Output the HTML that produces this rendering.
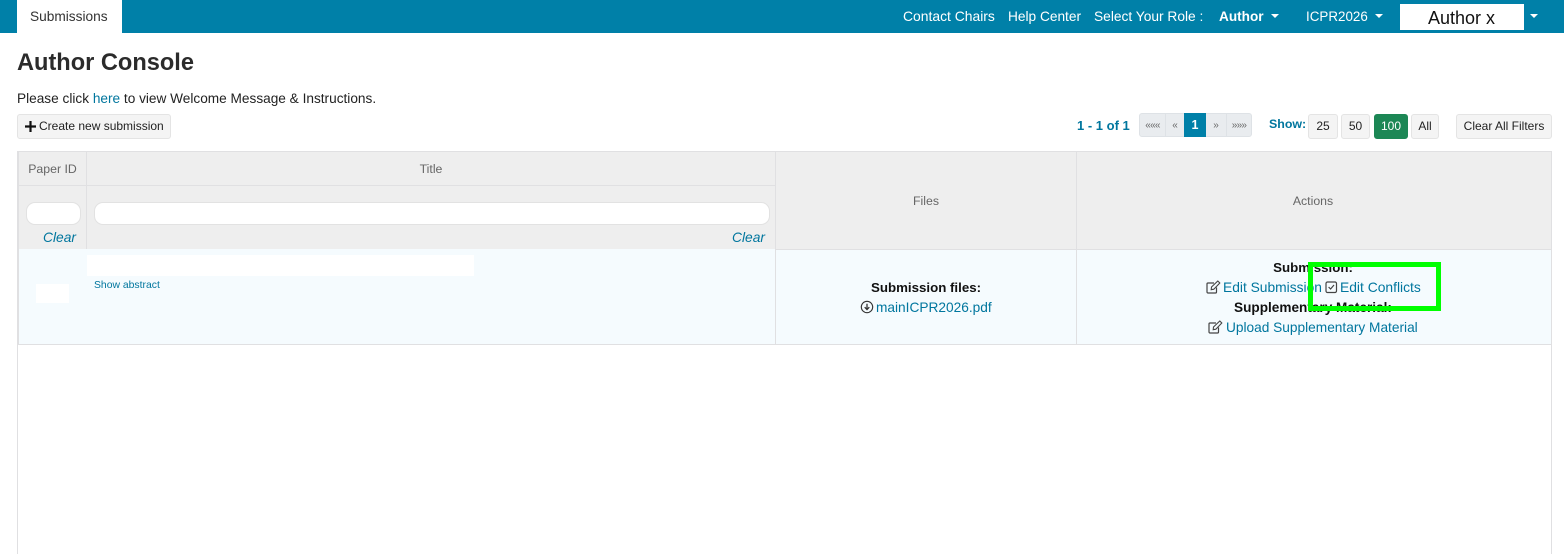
<!DOCTYPE html>
<html><head><meta charset="utf-8"><style>
html,body{margin:0;padding:0;background:#fff}
body{width:1564px;height:554px;position:relative;overflow:hidden;font-family:"Liberation Sans",sans-serif;font-size:14px;color:#333}
.a{position:absolute;white-space:nowrap}
.b{position:absolute;box-sizing:border-box}
.l{color:#00769e}
.w{color:#fff}
.c{transform:translateX(-50%)}
.caret{position:absolute;width:0;height:0;border-left:4px solid transparent;border-right:4px solid transparent;border-top:4px solid #fff}
.btn{position:absolute;box-sizing:border-box;background:#f4f4f4;border:1px solid #e4e4e4;border-radius:3px;height:25px;font-size:12px;line-height:22px;text-align:center;color:#222;white-space:nowrap}
svg{position:absolute;overflow:visible}
</style></head><body>
<div class="b" style="left:0;top:0;width:1564px;height:33px;background:#0080a8"></div>
<div class="b" style="left:17px;top:0;width:105px;height:33px;background:#fff"></div>
<div class="a" style="left:30px;top:9px;font-size:13.7px;line-height:16px;color:#333">Submissions</div>
<div class="a w" style="left:903px;top:8px;font-size:13.9px;line-height:16px">Contact Chairs</div>
<div class="a w" style="left:1008px;top:9px;font-size:13.7px;line-height:16px">Help Center</div>
<div class="a w" style="left:1094px;top:9px;font-size:13.75px;line-height:16px">Select Your Role :</div>
<div class="a w" style="left:1219px;top:9px;font-size:13.6px;line-height:16px;font-weight:bold">Author</div>
<div class="caret" style="left:1271px;top:14px"></div>
<div class="a w" style="left:1306px;top:9px;font-size:13.4px;line-height:16px">ICPR2026</div>
<div class="caret" style="left:1375px;top:14px"></div>
<div class="b" style="left:1400px;top:4px;width:124px;height:26px;background:#fff"></div>
<div class="a" style="left:1428px;top:8px;font-size:18px;line-height:20px;color:#111">Author x</div>
<div class="caret" style="left:1530px;top:14px"></div>

<div class="a" style="left:17px;top:49px;font-size:23.6px;line-height:28px;font-weight:bold;color:#2b2b2b">Author Console</div>
<div class="a" style="left:17px;top:91px;font-size:13.65px;line-height:16px;color:#222">Please click <span class="l">here</span> to view Welcome Message &amp; Instructions.</div>
<div class="btn" style="left:17px;top:114px;width:154px;text-align:left;padding-left:8px"><svg style="left:7px;top:6px" width="11" height="11" viewBox="0 0 11 11"><path d="M5.5 0v11M0 5.5h11" stroke="#111" stroke-width="2.2"/></svg><span style="margin-left:13px">Create new submission</span></div>

<div class="a l" style="left:1077px;top:118px;font-size:13px;line-height:15px;font-weight:bold">1 - 1 of 1</div>
<div class="b" style="left:1139px;top:113px;width:113px;height:24px;background:#e9ecef;border:1px solid #dee2e6;border-radius:3px"></div>
<div class="b" style="left:1165px;top:114px;width:1px;height:22px;background:#dee2e6"></div>
<div class="b" style="left:1140px;top:113px;width:25px;height:24px;font-size:10px;letter-spacing:-0.7px;line-height:26px;text-align:center;color:#666">«««</div>
<div class="b" style="left:1166px;top:113px;width:18px;height:24px;font-size:10px;line-height:26px;text-align:center;color:#666">«</div>
<div class="b" style="left:1184px;top:113px;width:22px;height:24px;background:#0080a8;color:#fff;font-size:12.5px;font-weight:bold;line-height:25px;text-align:center">1</div>
<div class="b" style="left:1206px;top:113px;width:20px;height:24px;font-size:10px;line-height:26px;text-align:center;color:#666">»</div>
<div class="b" style="left:1226px;top:114px;width:1px;height:22px;background:#dee2e6"></div>
<div class="b" style="left:1227px;top:113px;width:24px;height:24px;font-size:10px;letter-spacing:-0.7px;line-height:26px;text-align:center;color:#666">»»»</div>
<div class="a l" style="left:1269px;top:117px;font-size:12.4px;line-height:15px;font-weight:bold">Show:</div>
<div class="btn" style="left:1308px;top:114px;width:30px">25</div>
<div class="btn" style="left:1341px;top:114px;width:29px">50</div>
<div class="btn" style="left:1374px;top:114px;width:34px;background:#1c8755;border-color:#1c8755;color:#fff">100</div>
<div class="btn" style="left:1411px;top:114px;width:28px">All</div>
<div class="btn" style="left:1456px;top:114px;width:96px">Clear All Filters</div>

<!-- table -->
<div class="b" style="left:18px;top:152px;width:758px;height:98px;background:#eee"></div>
<div class="b" style="left:776px;top:152px;width:775px;height:98px;background:#eee"></div>
<div class="b" style="left:18px;top:249px;width:1533px;height:96px;background:#f5fbfe"></div>
<div class="b" style="left:18px;top:151px;width:1534px;height:1px;background:#e0e0e2"></div>
<div class="b" style="left:17px;top:151px;width:1px;height:403px;background:#e0e0e2"></div>
<div class="b" style="left:18px;top:152px;width:1px;height:193px;background:#e0e0e2"></div>
<div class="b" style="left:1551px;top:151px;width:1px;height:403px;background:#e0e0e2"></div>
<div class="b" style="left:18px;top:185px;width:758px;height:1px;background:#e0e0e2"></div>
<div class="b" style="left:86px;top:152px;width:1px;height:97px;background:#e0e0e2"></div>
<div class="b" style="left:775px;top:152px;width:1px;height:193px;background:#e0e0e2"></div>
<div class="b" style="left:1076px;top:152px;width:1px;height:193px;background:#e0e0e2"></div>
<div class="b" style="left:776px;top:249px;width:775px;height:1px;background:#e0e0e2"></div>
<div class="b" style="left:18px;top:344px;width:1533px;height:1px;background:#e0e0e2"></div>

<div class="a c" style="left:52.5px;top:162px;font-size:12.3px;line-height:15px;color:#666">Paper ID</div>
<div class="a c" style="left:431px;top:162px;font-size:12.3px;line-height:15px;color:#666">Title</div>
<div class="a c" style="left:926px;top:194px;font-size:12.3px;line-height:15px;color:#666">Files</div>
<div class="a c" style="left:1313px;top:194px;font-size:12.3px;line-height:15px;color:#666">Actions</div>

<div class="b" style="left:26px;top:202px;width:55px;height:23px;background:#fff;border:1px solid #e2e2e2;border-radius:9px"></div>
<div class="b" style="left:94px;top:202px;width:676px;height:23px;background:#fff;border:1px solid #e2e2e2;border-radius:9px"></div>
<div class="a l" style="left:43px;top:230px;font-size:13.8px;line-height:16px;font-style:italic">Clear</div>
<div class="a l" style="left:732px;top:230px;font-size:13.8px;line-height:16px;font-style:italic">Clear</div>

<div class="b" style="left:87px;top:255px;width:387px;height:21px;background:#fff"></div>
<div class="b" style="left:36px;top:284px;width:33px;height:19px;background:#fff"></div>
<div class="a l" style="left:94px;top:279px;font-size:10.4px;line-height:13px">Show abstract</div>

<div class="a c" style="left:926px;top:280px;font-size:13.3px;line-height:16px;font-weight:bold;color:#111">Submission files:</div>
<svg style="left:860px;top:300px" width="14" height="14" viewBox="0 0 14 14"><circle cx="7" cy="7" r="5.7" fill="none" stroke="#333" stroke-width="1.1"/><path d="M7 3.8v5.6M4.7 7.2 7 9.6l2.3-2.4" fill="none" stroke="#333" stroke-width="1.3"/></svg>
<div class="a l" style="left:876px;top:300px;font-size:13.7px;line-height:16px">mainICPR2026.pdf</div>

<div class="a c" style="left:1313px;top:260px;font-size:13.3px;line-height:16px;font-weight:bold;color:#111">Submission:</div>
<svg style="left:1206px;top:280px" width="15" height="14" viewBox="0 0 15 14"><path d="M10.5 7.5V12a1 1 0 0 1-1 1H2a1 1 0 0 1-1-1V4a1 1 0 0 1 1-1h6" fill="none" stroke="#444" stroke-width="1.2"/><path d="M5.5 7 11.8 1l2 2-6 6.2-2.6.5z" fill="none" stroke="#444" stroke-width="1.1"/></svg>
<div class="a l" style="left:1223px;top:280px;font-size:13.8px;line-height:16px">Edit Submission</div>
<svg style="left:1325px;top:280px" width="13" height="14" viewBox="0 0 13 14"><rect x="1" y="2" width="10.5" height="10.5" rx="1.5" fill="none" stroke="#444" stroke-width="1.2"/><path d="M3.6 7 5.6 9 9 5" fill="none" stroke="#444" stroke-width="1.2"/></svg>
<div class="a l" style="left:1340px;top:279px;font-size:13.85px;line-height:16px">Edit Conflicts</div>
<div class="a c" style="left:1313px;top:300px;font-size:13.6px;line-height:16px;font-weight:bold;color:#111">Supplementary Material:</div>
<svg style="left:1208px;top:320px" width="15" height="14" viewBox="0 0 15 14"><path d="M10.5 7.5V12a1 1 0 0 1-1 1H2a1 1 0 0 1-1-1V4a1 1 0 0 1 1-1h6" fill="none" stroke="#444" stroke-width="1.2"/><path d="M5.5 7 11.8 1l2 2-6 6.2-2.6.5z" fill="none" stroke="#444" stroke-width="1.1"/></svg>
<div class="a l" style="left:1226px;top:320px;font-size:13.7px;line-height:16px">Upload Supplementary Material</div>

<div class="b" style="left:1308px;top:262px;width:133px;height:49px;border:5px solid #00ff00"></div>
</body></html>
